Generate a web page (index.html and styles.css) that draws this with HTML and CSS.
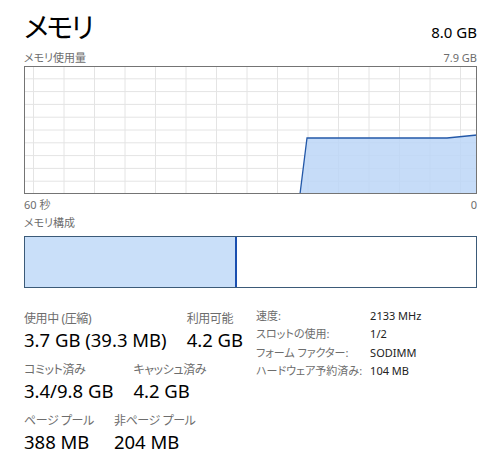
FILE: index.html
```html
<!DOCTYPE html>
<html lang="ja">
<head>
    <meta charset="UTF-8">
    <title>メモリ</title>
    <link rel="stylesheet" href="styles.css">
</head>
<body>
    <div class="page">
        <div class="header">
            <h1>メモリ</h1>
            <div class="total">8.0 GB</div>
        </div>

        <div class="chart-head">
            <span>メモリ使用量</span>
            <span>7.9 GB</span>
        </div>
        <svg class="chart" width="453" height="128" viewBox="0 0 453 128">
            <g stroke="#e4e4e4" stroke-width="1">
                <line x1="0" y1="12.8" x2="453" y2="12.8"/>
                <line x1="0" y1="25.6" x2="453" y2="25.6"/>
                <line x1="0" y1="38.4" x2="453" y2="38.4"/>
                <line x1="0" y1="51.2" x2="453" y2="51.2"/>
                <line x1="0" y1="64" x2="453" y2="64"/>
                <line x1="0" y1="76.8" x2="453" y2="76.8"/>
                <line x1="0" y1="89.6" x2="453" y2="89.6"/>
                <line x1="0" y1="102.4" x2="453" y2="102.4"/>
                <line x1="0" y1="115.2" x2="453" y2="115.2"/>
                <line x1="9.5" y1="0" x2="9.5" y2="128"/>
                <line x1="40" y1="0" x2="40" y2="128"/>
                <line x1="70.5" y1="0" x2="70.5" y2="128"/>
                <line x1="101" y1="0" x2="101" y2="128"/>
                <line x1="131.5" y1="0" x2="131.5" y2="128"/>
                <line x1="162" y1="0" x2="162" y2="128"/>
                <line x1="192.5" y1="0" x2="192.5" y2="128"/>
                <line x1="223" y1="0" x2="223" y2="128"/>
                <line x1="253.5" y1="0" x2="253.5" y2="128"/>
                <line x1="284" y1="0" x2="284" y2="128"/>
                <line x1="314.5" y1="0" x2="314.5" y2="128"/>
                <line x1="345" y1="0" x2="345" y2="128"/>
                <line x1="375.5" y1="0" x2="375.5" y2="128"/>
                <line x1="406" y1="0" x2="406" y2="128"/>
                <line x1="436.5" y1="0" x2="436.5" y2="128"/>
            </g>
            <polygon points="276,128 283,72 423,72 453,69 453,128" fill="#bcd6f7" fill-opacity="0.85"/>
            <polyline points="276,128 283,72 423,72 453,69" fill="none" stroke="#2358a8" stroke-width="1.3"/>
            <rect x="0.5" y="0.5" width="452" height="127" fill="none" stroke="#747474" stroke-width="1"/>
        </svg>
        <div class="chart-foot">
            <span>60 秒</span>
            <span>0</span>
        </div>

        <div class="label comp-label">メモリ構成</div>
        <div class="composition">
            <div class="in-use"></div>
        </div>

        <div class="stats">
            <div class="stats-main">
                <div class="stat-row">
                    <div class="stat">
                        <div class="label">使用中 (圧縮)</div>
                        <div class="value">3.7 GB (39.3 MB)</div>
                    </div>
                    <div class="stat">
                        <div class="label">利用可能</div>
                        <div class="value">4.2 GB</div>
                    </div>
                </div>
                <div class="stat-row">
                    <div class="stat">
                        <div class="label">コミット済み</div>
                        <div class="value">3.4/9.8 GB</div>
                    </div>
                    <div class="stat">
                        <div class="label">キャッシュ済み</div>
                        <div class="value">4.2 GB</div>
                    </div>
                </div>
                <div class="stat-row">
                    <div class="stat">
                        <div class="label">ページ プール</div>
                        <div class="value">388 MB</div>
                    </div>
                    <div class="stat">
                        <div class="label">非ページ プール</div>
                        <div class="value">204 MB</div>
                    </div>
                </div>
            </div>
            <dl class="specs">
                <dt>速度:</dt>
                <dd>2133 MHz</dd>
                <dt>スロットの使用:</dt>
                <dd>1/2</dd>
                <dt>フォーム ファクター:</dt>
                <dd>SODIMM</dd>
                <dt>ハードウェア予約済み:</dt>
                <dd>104 MB</dd>
            </dl>
        </div>
    </div>
</body>
</html>
```

FILE: styles.css
```css
:root {
    --text-color: #000;
    --label-color: #6d6d6d;
    --line-color: #1a4fb0;
    --fill-color: #c9dff9;
}

body {
    margin: 0;
    background: #fff;
    color: var(--text-color);
    font-family: "Noto Sans", "Noto Sans CJK JP", sans-serif;
    font-feature-settings: "palt";
}

.page {
    width: 453px;
    padding: 9px 0 0 24px;
}

.header {
    display: flex;
    justify-content: space-between;
    align-items: baseline;
}

h1 {
    margin: 0;
    font-size: 28px;
    font-weight: normal;
    line-height: 36px;
    letter-spacing: -2px;
}

.total {
    font-size: 15px;
}

.chart-head,
.chart-foot {
    display: flex;
    justify-content: space-between;
    font-size: 11px;
    line-height: 16px;
    color: var(--label-color);
}

.chart-head {
    margin-top: 5px;
}

.chart {
    display: block;
}

.chart-foot {
    margin-top: 3px;
}

.label {
    font-size: 12px;
    line-height: 17px;
    letter-spacing: -0.4px;
    color: var(--label-color);
}

.comp-label {
    margin-top: 2px;
    font-size: 11px;
    line-height: 16px;
    letter-spacing: 0;
}

.composition {
    margin-top: 5px;
    height: 50px;
    border: 1px solid #3b5a78;
    display: flex;
}

.in-use {
    width: 210px;
    background: var(--fill-color);
    border-right: 2px solid var(--line-color);
}

.stats {
    display: flex;
    align-items: flex-start;
    margin-top: 22px;
}

.stats-main {
    display: flex;
    flex-direction: column;
    gap: 8px;
}

.stat-row {
    display: flex;
    gap: 20px;
}

.value {
    font-size: 18.5px;
    line-height: 26px;
}

.specs {
    margin: -3px 0 0 13px;
    display: grid;
    grid-template-columns: 114px auto;
    align-content: start;
    font-size: 11px;
    line-height: 18.3px;
}

.specs dt {
    color: var(--label-color);
}

.specs dd {
    margin: 0;
    color: #222;
}
```
